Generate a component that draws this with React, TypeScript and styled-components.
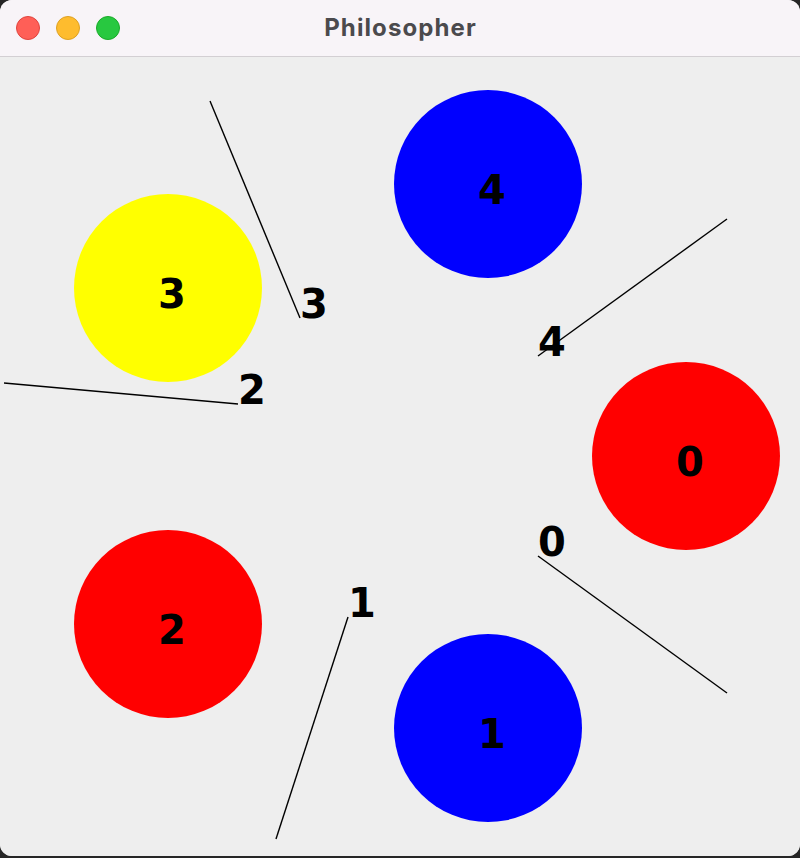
import React from "react";
import styled, { createGlobalStyle } from "styled-components";

// canvas starts under the 57px title bar, so page y = canvas y + 57
const TOP = 57;

interface Plate {
  id: number;
  cx: number;
  cy: number;
  color: string;
}

interface Chopstick {
  id: number;
  x1: number;
  y1: number;
  x2: number;
  y2: number;
}

const plates: Plate[] = [
  { id: 0, cx: 686, cy: 456, color: "#ff0000" },
  { id: 1, cx: 488, cy: 728, color: "#0000ff" },
  { id: 2, cx: 168, cy: 624, color: "#ff0000" },
  { id: 3, cx: 168, cy: 288, color: "#ffff00" },
  { id: 4, cx: 488, cy: 184, color: "#0000ff" },
];

// (x1, y1) is the inner end, where the label sits
const chopsticks: Chopstick[] = [
  { id: 0, x1: 538, y1: 556, x2: 727, y2: 693 },
  { id: 1, x1: 348, y1: 617, x2: 276, y2: 839 },
  { id: 2, x1: 238, y1: 404, x2: 4, y2: 383 },
  { id: 3, x1: 300, y1: 318, x2: 210, y2: 101 },
  { id: 4, x1: 538, y1: 356, x2: 727, y2: 219 },
];

const RADIUS = 94;

const App: React.FC = () => {
  return (
    <>
      <GlobalStyle />
      <Window>
        <TitleBar>
          <TrafficLights>
            <Light color="#ff5f57" border="#e0443e" />
            <Light color="#febc2e" border="#dea123" />
            <Light color="#28c840" border="#1aab29" />
          </TrafficLights>
          <Title>Philosopher</Title>
        </TitleBar>
        <Canvas>
          <Board viewBox={`0 ${TOP} 800 799`} width={800} height={799}>
            {plates.map((p) => (
              <g key={`p${p.id}`}>
                <PlateCircle cx={p.cx} cy={p.cy} r={RADIUS} fill={p.color} />
                <Label x={p.cx - 10} y={p.cy + 20}>
                  {p.id}
                </Label>
              </g>
            ))}
            {chopsticks.map((c) => (
              <g key={`c${c.id}`}>
                <Stick x1={c.x1} y1={c.y1} x2={c.x2} y2={c.y2} />
                <Label x={c.x1} y={c.y1}>
                  {c.id}
                </Label>
              </g>
            ))}
          </Board>
        </Canvas>
      </Window>
    </>
  );
};

export default App;

const GlobalStyle = createGlobalStyle`
  html, body {
    margin: 0;
    padding: 0;
    background: #262626;
  }
`;

const Window = styled.div`
  width: 800px;
  height: 856px;
  border-radius: 12px;
  overflow: hidden;
  display: flex;
  flex-direction: column;
  background: #eeeeee;
`;

const TitleBar = styled.div`
  position: relative;
  height: 56px;
  flex-shrink: 0;
  background: #f8f4f8;
  border-bottom: 1px solid #d3cfd3;
  display: flex;
  align-items: center;
  justify-content: center;
`;

const TrafficLights = styled.div`
  position: absolute;
  left: 16px;
  top: 16px;
  display: flex;
  gap: 16px;
`;

const Light = styled.span<{ color: string; border: string }>`
  display: block;
  width: 22px;
  height: 22px;
  border-radius: 50%;
  background: ${({ color }) => color};
  border: 1px solid ${({ border }) => border};
`;

const Title = styled.div`
  font-family: Inter, "Noto Sans", sans-serif;
  font-weight: 700;
  font-size: 24px;
  letter-spacing: 1.1px;
  color: #4b4a4d;
  margin-top: -2px;
  padding-left: 1px;
`;

const Canvas = styled.div`
  flex: 1;
  background: #eeeeee;
`;

const Board = styled.svg`
  display: block;
`;

const PlateCircle = styled.circle``;

const Stick = styled.line`
  stroke: #000;
  stroke-width: 1.4;
`;

const Label = styled.text`
  font-family: "DejaVu Sans", sans-serif;
  font-weight: 700;
  font-size: 40px;
  fill: #000;
`;
